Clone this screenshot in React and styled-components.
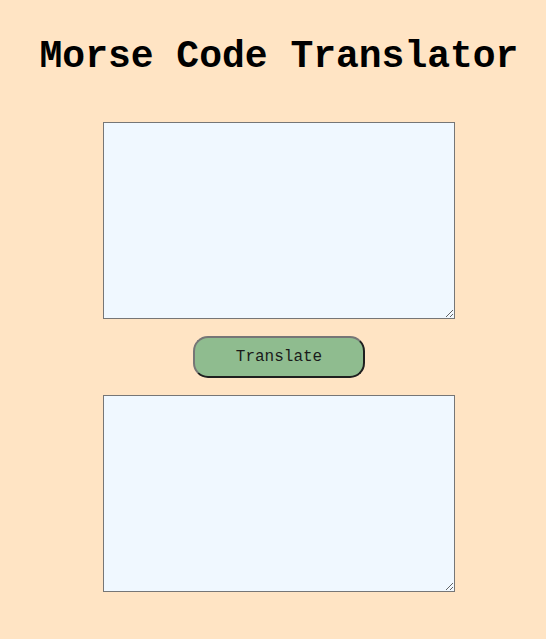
import React, { useState } from 'react'
import styled, { createGlobalStyle } from 'styled-components'

const mono = `'Courier New', Courier, 'Nimbus Mono PS', FreeMono, 'Liberation Mono', monospace`

const GlobalStyle = createGlobalStyle`
  html, body {
    margin: 0;
    background: #ffe4c4;
  }
  body {
    font-family: ${mono};
  }
`

export default function App() {
  const [input, setInput] = useState('')
  const [output, setOutput] = useState('')

  return (
    <Page>
      <GlobalStyle />
      <Title>Morse Code Translator</Title>
      <TextBox value={input} onChange={(e) => setInput(e.target.value)} />
      <TranslateButton onClick={() => setOutput(input)}>Translate</TranslateButton>
      <TextBox value={output} onChange={(e) => setOutput(e.target.value)} />
    </Page>
  )
}

const Page = styled.div`
  display: flex;
  flex-direction: column;
  align-items: center;
  padding: 35px 0 40px 12px;
`

const Title = styled.h1`
  margin: 0 0 44px;
  font-family: ${mono};
  font-size: 38px;
  font-weight: bold;
  line-height: 43px;
  color: #000;
  white-space: nowrap;
`

const TextBox = styled.textarea`
  box-sizing: border-box;
  width: 352px;
  height: 197px;
  margin: 0;
  background: #f0f8ff;
  border: 1px solid #767676;
  font-family: ${mono};
  font-size: 13px;
`

const TranslateButton = styled.button`
  box-sizing: border-box;
  width: 172px;
  height: 42px;
  margin: 17px 0;
  background: #8fbc8f;
  border: 2px solid;
  border-color: #767676 #1f1f1f #1f1f1f #767676;
  border-radius: 15px;
  font-family: ${mono};
  font-size: 16px;
  color: #1a1a1a;
  cursor: pointer;
`
